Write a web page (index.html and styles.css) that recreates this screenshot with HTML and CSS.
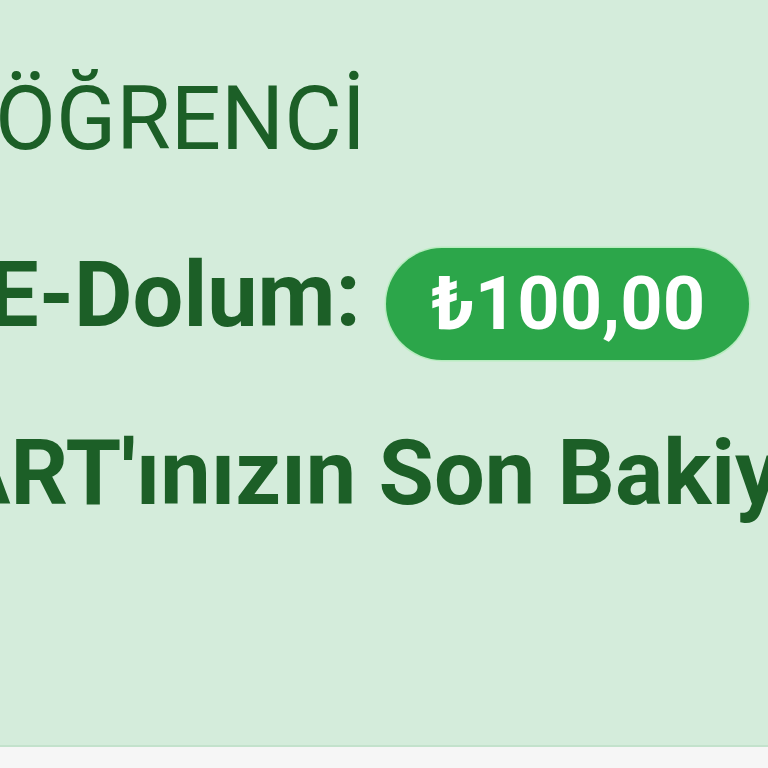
FILE: index.html
```html
<!DOCTYPE html>
<html lang="tr">
<head>
<meta charset="utf-8">
<link rel="stylesheet" href="styles.css">
</head>
<body>
<div class="card">
  <div class="row title">ÖĞRENCİ</div>
  <div class="row load">
    <span class="label">E-Dolum:</span>
    <span class="pill">₺100,00</span>
  </div>
  <div class="row balance">ART'ınızın Son Bakiyesi</div>
</div>
<div class="footer"></div>
</body>
</html>
```

FILE: styles.css
```css
html, body {
  margin: 0;
  padding: 0;
  background: #f6f6f6;
  font-family: Roboto, "Noto Sans", sans-serif;
}
.card {
  height: 747px;
  background: #d4ecdb;
  overflow: hidden;
  border-bottom: 2px solid #c3e2cc;
  box-sizing: border-box;
  padding-top: 69px;
}
.row {
  white-space: nowrap;
  color: #1c5f27;
  font-size: 90px;
  line-height: 100px;
}
.title {
  font-size: 88.5px;
  font-weight: 400;
  margin-left: -5px;
}
.load {
  margin-top: 79px;
  display: flex;
  align-items: flex-start;
  gap: 25px;
  margin-left: -12px;
}
.label {
  font-weight: 700;
  margin-top: -2px;
}
.pill {
  background: #2ca64a;
  color: #ffffff;
  font-weight: 700;
  font-size: 74px;
  line-height: 112px;
  height: 112px;
  padding: 0 44px 0 45px;
  border-radius: 56px;
  box-shadow: 0 0 0 1.5px #b7ecbf;
}
.balance {
  font-weight: 700;
  margin-top: 64px;
  margin-left: -50px;
}
.footer {
  height: 21px;
  background: #f6f6f6;
}
```
